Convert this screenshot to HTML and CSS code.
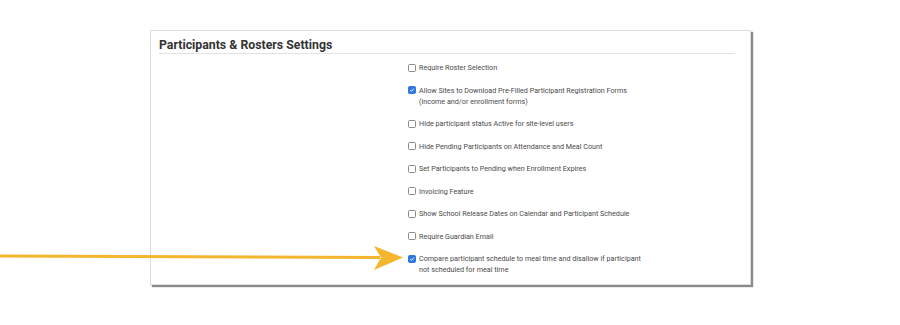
FILE: index.html
```html
<!DOCTYPE html>
<html>
<head>
<meta charset="utf-8">
<link rel="stylesheet" href="styles.css">
</head>
<body>
<div class="stage">
  <div class="card">
    <h2 class="title">Participants &amp; Rosters Settings</h2>
    <div class="content">
      <div class="spacer"></div>
      <ul class="opts">
        <li class="opt"><span class="box"></span><span class="lbl">Require Roster Selection</span></li>
        <li class="opt"><span class="box on"><svg viewBox="0 0 10 10"><path d="M2.2 5.2 L4.2 7.2 L7.9 2.8" /></svg></span><span class="lbl">Allow Sites to Download Pre-Filled Participant Registration Forms<br>(income and/or enrollment forms)</span></li>
        <li class="opt"><span class="box"></span><span class="lbl">Hide participant status Active for site-level users</span></li>
        <li class="opt"><span class="box"></span><span class="lbl">Hide Pending Participants on Attendance and Meal Count</span></li>
        <li class="opt"><span class="box"></span><span class="lbl">Set Participants to Pending when Enrollment Expires</span></li>
        <li class="opt"><span class="box"></span><span class="lbl">Invoicing Feature</span></li>
        <li class="opt"><span class="box"></span><span class="lbl">Show School Release Dates on Calendar and Participant Schedule</span></li>
        <li class="opt"><span class="box"></span><span class="lbl">Require Guardian Email</span></li>
        <li class="opt"><span class="box on"><svg viewBox="0 0 10 10"><path d="M2.2 5.2 L4.2 7.2 L7.9 2.8" /></svg></span><span class="lbl">Compare participant schedule to meal time and disallow if participant<br>not scheduled for meal time</span></li>
      </ul>
    </div>
  </div>
  <svg class="arrow" width="410" height="30" viewBox="0 0 410 30">
    <path d="M0 10 L380 11.5" stroke="#f4b52f" stroke-width="3" fill="none"/>
    <path d="M374 0 L403 11.5 L374 24 L381 11.5 Z" fill="#f4b52f"/>
  </svg>
</div>
</body>
</html>
```
FILE: styles.css
```css
* { box-sizing: border-box; }
html, body { margin: 0; padding: 0; background: #fff; }
body { font-family: Roboto, "Liberation Sans", sans-serif; color: #333; }
.stage { position: relative; width: 900px; height: 325px; padding: 30px 0 0 150px; }
.card {
  width: 601px;
  height: 255px;
  border: 1px solid #dcdcdc;
  background: #fff;
  box-shadow: 2px 2px 1px #8a8a8a;
  padding: 6px 15px 0 8px;
}
.title {
  margin: 0;
  font-size: 12.3px;
  font-weight: 700;
  line-height: 17px;
  color: #333;
  border-bottom: 1px solid #e2e2e2;
  height: 17px;
}
.content { display: grid; grid-template-columns: 249px 1fr; padding-top: 8px; }
.opts { list-style: none; margin: 0; padding: 0; display: flex; flex-direction: column; gap: 11.5px; }
.opt { display: flex; align-items: flex-start; gap: 3px; font-size: 7.2px; line-height: 11px; color: #4a4a4a; }
.box {
  flex: none;
  width: 8px; height: 8px;
  margin-top: 1.5px;
  border: 1px solid #8a8a8a;
  border-radius: 1.5px;
  background: #fff;
  display: flex;
}
.box.on { background: #2f78e0; border-color: #2f78e0; }
.box svg { width: 100%; height: 100%; }
.box svg path { fill: none; stroke: #fff; stroke-width: 1.6; }
.arrow { position: absolute; left: 0; top: 246px; }
```
